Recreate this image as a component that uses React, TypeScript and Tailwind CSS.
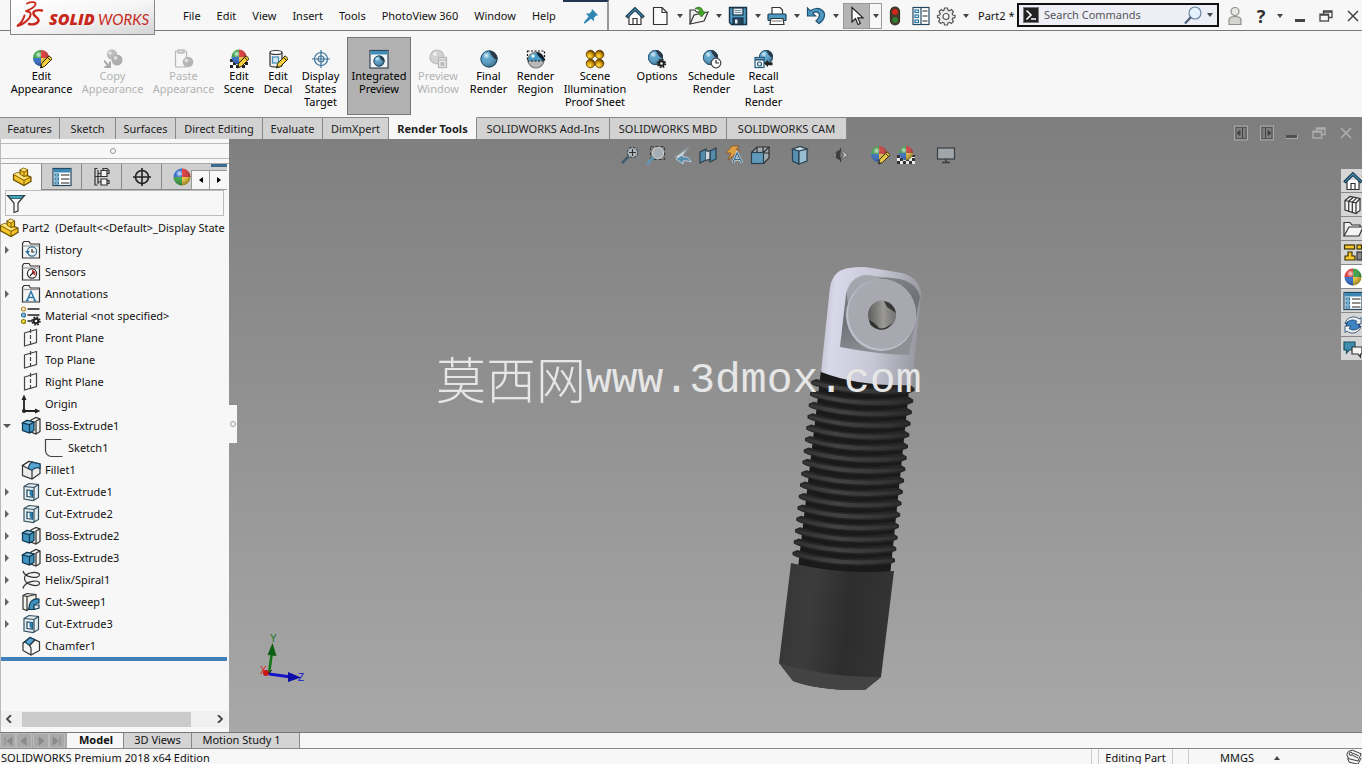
import React from "react";

type P = { className?: string };

const Svg = ({
  s = 20,
  className = "",
  children,
}: {
  s?: number;
  className?: string;
  children: React.ReactNode;
}) => (
  <svg
    width={s}
    height={s}
    viewBox="0 0 20 20"
    fill="none"
    stroke="#333"
    strokeWidth="1.2"
    className={"shrink-0 " + className}
    aria-hidden="true"
  >
    {children}
  </svg>
);

const Defs = () => (
  <svg width="0" height="0" className="absolute" aria-hidden="true">
    <defs>
      <radialGradient id="shine" cx="0.35" cy="0.3" r="0.75">
        <stop offset="0" stopColor="#fff" stopOpacity="0.85" />
        <stop offset="0.3" stopColor="#fff" stopOpacity="0.1" />
        <stop offset="1" stopColor="#000" stopOpacity="0.4" />
      </radialGradient>
      <radialGradient id="gold" cx="0.4" cy="0.7" r="0.7">
        <stop offset="0" stopColor="#ffe14a" />
        <stop offset="0.6" stopColor="#c88a00" />
        <stop offset="1" stopColor="#4a2c00" />
      </radialGradient>
    </defs>
  </svg>
);

const Caret = ({ className = "" }: P) => (
  <svg width="6" height="4" viewBox="0 0 6 4" className={"shrink-0 " + className} aria-hidden="true">
    <path d="M0 0h6L3 4z" fill="#444" />
  </svg>
);

const PieBall = ({
  cx = 10,
  cy = 9,
  r = 8,
  colors = ["#2563c9", "#d92b2b", "#f0c62e", "#2f9e3c"],
}: {
  cx?: number;
  cy?: number;
  r?: number;
  colors?: string[];
}) => (
  <g stroke="none">
    <path d={`M${cx} ${cy}V${cy - r}A${r} ${r} 0 0 0 ${cx - r} ${cy}z`} fill={colors[0]} />
    <path d={`M${cx} ${cy}V${cy - r}A${r} ${r} 0 0 1 ${cx + r} ${cy}z`} fill={colors[1]} />
    <path d={`M${cx} ${cy}V${cy + r}A${r} ${r} 0 0 0 ${cx + r} ${cy}z`} fill={colors[2]} />
    <path d={`M${cx} ${cy}V${cy + r}A${r} ${r} 0 0 1 ${cx - r} ${cy}z`} fill={colors[3]} />
    <circle cx={cx} cy={cy} r={r} fill="url(#shine)" />
  </g>
);

const BlueBall = ({ cx = 10, cy = 10, r = 8 }: { cx?: number; cy?: number; r?: number }) => (
  <g stroke="none">
    <circle cx={cx} cy={cy} r={r} fill="#4a9ac6" />
    <path
      d={`M${cx} ${cy - r}A${r} ${r} 0 0 1 ${cx + r} ${cy}Q${cx + r / 2} ${cy + r / 6} ${cx} ${cy - r}z`}
      fill="#0f1e2c"
    />
    <circle cx={cx} cy={cy} r={r} fill="url(#shine)" />
    <circle cx={cx} cy={cy} r={r - 0.4} fill="none" stroke="#21465e" strokeWidth="0.9" />
  </g>
);

const Pencil = () => (
  <g strokeWidth="1">
    <path d="M8.5 19l1.2-4.6 7.5-7.6 3 3-7.6 7.6z" fill="#f5cf3e" stroke="#2b2200" />
    <path d="M8.5 19l.6-2.4 1.8 1.8z" fill="#222" stroke="none" />
    <path d="M15.5 8.4l3 3" stroke="#2b2200" />
  </g>
);

const pencilBall = ["#2f9e3c", "#d92b2b", "#f0c62e", "#2563c9"];

const EditAppearanceIcon = () => (
  <Svg>
    <PieBall cx={9} colors={pencilBall} />
    <Pencil />
  </Svg>
);
const CopyAppearanceIcon = () => (
  <Svg>
    <g stroke="none" fill="#bdbdbd">
      <circle cx="9" cy="5.5" r="5.2" />
      <circle cx="14" cy="11" r="5.5" fill="#adadad" />
      <circle cx="7" cy="4" r="1.8" fill="#e2e2e2" />
      <circle cx="12.5" cy="9" r="2" fill="#dcdcdc" />
      <path d="M1 10.5l5 5V12.5h2v6.5H1.500v-2H4L1 13z" fill="#a8a8a8" />
    </g>
  </Svg>
);
const PasteAppearanceIcon = () => (
  <Svg>
    <rect x="1.5" y="2" width="11" height="16" rx="1" stroke="#b5b5b5" />
    <rect x="4" y="1" width="6" height="3" fill="#ddd" stroke="#b5b5b5" />
    <circle cx="14" cy="13" r="5.3" fill="#b5b5b5" stroke="none" />
    <circle cx="12.5" cy="11.5" r="2" fill="#ddd" stroke="none" />
  </Svg>
);
const Checker = () => (
  <g stroke="none">
    <rect x="1" y="10" width="18" height="9" fill="#fff" />
    <path
      d="M1 10h3v3H1zM4 13h3v3H4zM1 16h3v3H1zM7 16h3v3H7zM13 16h3v3h-3zM16 13h3v3h-3zM10 13h3v3h-3zM16 10h3v2h-3z"
      fill="#222"
    />
  </g>
);
const EditSceneIcon = () => (
  <Svg>
    <Checker />
    <PieBall cx={10} cy={8} r={7.5} colors={pencilBall} />
    <Pencil />
  </Svg>
);
const EditDecalIcon = () => (
  <Svg>
    <path d="M2 3.5v13c0 2 12 2 12 0v-13" fill="#eee" />
    <ellipse cx="8" cy="3.5" rx="6" ry="2" fill="#fff" />
    <rect x="4.5" y="8" width="6" height="6" fill="#cfe6f2" stroke="#3f8db8" />
    <Pencil />
  </Svg>
);
const TargetBlueIcon = () => (
  <Svg>
    <g stroke="#38719b">
      <circle cx="10" cy="10" r="6.5" />
      <circle cx="10" cy="10" r="3" />
      <path d="M10 1v18M1 10h18" />
    </g>
  </Svg>
);
const IntegratedIcon = () => (
  <Svg>
    <rect x="1" y="1.5" width="18" height="17.5" fill="#f4f4f4" stroke="#345" />
    <rect x="1.5" y="2" width="17" height="3.5" fill="#3f8db8" stroke="none" />
    <BlueBall cy={12} r={5.5} />
  </Svg>
);
const PreviewWindowIcon = () => (
  <Svg>
    <circle cx="9" cy="8" r="7" fill="#d2d2d2" stroke="#bbb" />
    <circle cx="7" cy="5" r="2" fill="#eee" stroke="none" />
    <rect x="10.5" y="8.5" width="8" height="10" fill="#e8e8e8" stroke="#b5b5b5" />
    <path d="M10.5 11h8" stroke="#b5b5b5" />
    <rect x="12.5" y="13" width="4" height="4" fill="#bbb" stroke="none" />
  </Svg>
);
const FinalRenderIcon = () => (
  <Svg>
    <BlueBall r={8.5} />
  </Svg>
);
const RenderRegionIcon = () => (
  <Svg>
    <circle cx="10" cy="11" r="8" fill="#b9b9b9" stroke="#777" />
    <path d="M2 12a8 8 0 0 1 16 0z" fill="#4a9ac6" stroke="none" />
    <path d="M10 3a8 8 0 0 1 8 9Q13 9 10 3z" fill="#0f1e2c" stroke="none" />
    <circle cx="7" cy="7" r="1.8" fill="#dff" stroke="none" />
    <rect x="1.5" y="2" width="17" height="10" stroke="#111" strokeDasharray="2 1.5" />
  </Svg>
);
const IlluminationIcon = () => (
  <Svg>
    {[5.5, 14.5].map((x) =>
      [5.5, 14.5].map((y) => (
        <circle key={`${x}-${y}`} cx={x} cy={y} r="4.3" fill="url(#gold)" stroke="#5a3b00" strokeWidth="0.8" />
      )),
    )}
  </Svg>
);
const Gear = ({ x = 14.5, y = 14.5 }: { x?: number; y?: number }) => (
  <g transform={`translate(${x} ${y})`}>
    <circle r="3.7" stroke="#222" strokeWidth="2" strokeDasharray="1.6 1.3" />
    <circle r="2.3" stroke="#222" strokeWidth="2" fill="#f6f6f6" />
  </g>
);
const OptionsIcon = () => (
  <Svg>
    <BlueBall cx={8.5} cy={8.5} r={7.5} />
    <Gear />
  </Svg>
);
const ScheduleIcon = () => (
  <Svg>
    <BlueBall cx={8.5} cy={8.5} r={7.5} />
    <circle cx="14" cy="14" r="4.8" fill="#fff" stroke="#444" />
    <path d="M14 11v3h3" stroke="#333" />
  </Svg>
);
const RecallIcon = () => (
  <Svg>
    <BlueBall cx={12} cy={8} r={7} />
    <rect x="1" y="8.5" width="9" height="10" fill="#f6f6f6" stroke="#245a7c" />
    <path d="M1 10.5h9" stroke="#245a7c" strokeWidth="2" />
    <circle cx="5.5" cy="15" r="2" stroke="#245a7c" />
    <path d="M10 14.5l4-3.5v2.200h4.500v3H14V18z" fill="#222" stroke="none" />
  </Svg>
);

const HomeIcon = () => (
  <Svg>
    <path d="M4 9v9.500h12V9" fill="#fff" />
    <path d="M8 18.5v-6h4v6" />
    <path d="M10 1.5L1 10.300l1.500 1.400L10 4.500l7.500 7.200 1.500-1.400z" fill="#4a9ec6" stroke="#1d3d52" />
  </Svg>
);
const NewIcon = () => (
  <Svg>
    <path d="M3.5 1.5h8.500l5 5v12H3.500z" fill="#fbfbfb" />
    <path d="M12 1.5v5h5" />
  </Svg>
);
const OpenIcon = () => (
  <Svg>
    <path d="M1 18V4h5l1.500 2H14v3" fill="#eee" />
    <path d="M1 18L5 9l14-3-4 9z" fill="#f4f4f2" />
    <path
      d="M6 2.500c5-3 8 0 8 3.500h2.500L12.500 11 8.500 6H11c0-2-2-3.500-5-3.500z"
      fill="#46a52b"
      stroke="#2a6e17"
      strokeWidth="0.8"
    />
  </Svg>
);
const SaveIcon = () => (
  <Svg>
    <path d="M1.500 1.500h17v17h-15l-2-2z" fill="#4d96bd" stroke="#173349" strokeWidth="1.4" />
    <rect x="5" y="2" width="10" height="7" fill="#e9eef2" stroke="#173349" />
    <path d="M6.500 4.500h7M6.500 6.500h7" stroke="#7c93a3" />
    <rect x="5" y="12" width="10" height="6.5" fill="#27435a" stroke="#173349" />
    <rect x="7" y="13.5" width="2.5" height="4" fill="#e9eef2" stroke="none" />
  </Svg>
);
const PrintIcon = () => (
  <Svg>
    <path d="M5 8V1.500h8l2.500 2.500v4" fill="#fff" />
    <rect x="1" y="8" width="18" height="6.5" rx="1" fill="#4d9ac3" stroke="#1d3d52" />
    <path d="M4 12.500h12l1 6H3z" fill="#fff" />
    <path d="M5 15h10" stroke="#888" />
  </Svg>
);
const UndoIcon = () => (
  <Svg>
    <path
      d="M1.500 2v8h8L6.800 7.300c4-3 8-.3 6 4-.8 1.700-1.600 2.700-2.800 3.700l3 2.500c6-4 7-10 3.500-13C13 1.500 8 2 4.300 4.800z"
      fill="#4d9ac3"
      stroke="#1d4f70"
    />
  </Svg>
);
const CursorIcon = () => (
  <Svg>
    <path d="M5 1.500v14.500l3.500-3.500 2.500 6 2.300-1-2.500-5.700H16z" fill="#fff" stroke="#222" />
  </Svg>
);
const LightIcon = () => (
  <Svg>
    <rect x="5.500" y="1" width="9" height="18" rx="4.500" fill="#4a3a2c" stroke="#332" />
    <circle cx="10" cy="5.800" r="2.900" fill="#d8251c" stroke="none" />
    <circle cx="10" cy="14" r="2.900" fill="#2d7d33" stroke="none" />
  </Svg>
);
const ListIcon = () => (
  <Svg>
    <rect x="2" y="1.500" width="16" height="17" fill="#fff" stroke="#24485f" />
    <path d="M10 1.500v17" stroke="#24485f" />
    <g stroke="#2878a5">
      <rect x="4" y="4" width="3.500" height="2.500" />
      <rect x="4" y="9" width="3.500" height="2.500" />
      <rect x="4" y="14" width="3.500" height="2.500" />
    </g>
    <path d="M11.500 5h5M11.500 10h5M11.500 15h5" stroke="#222" />
  </Svg>
);
const GearIcon = () => (
  <Svg>
    <path
      d="M8.500 2h3l.5 2.200 1.400.6 2-1.200 2 2-1.200 2 .6 1.400 2.200.5v2l-2.200.6-.6 1.400 1.200 2-2 2-2-1.200-1.400.6-.5 2.100h-3l-.5-2.100-1.400-.6-2 1.200-2-2 1.200-2-.6-1.400L1.500 11.500v-2L3.700 9l.6-1.400-1.200-2 2-2 2 1.200L8 4.200z"
      fill="#eee"
      stroke="#555"
    />
    <circle cx="10" cy="10.500" r="3" fill="#f7f7f7" stroke="#555" />
  </Svg>
);
const PinIcon = () => (
  <Svg s={16}>
    <path d="M11 1l8 8-2.500.5-3 3 .5 4.500-4-3.500L3 19l-2 .5.500-2L7 10.500 3.500 7 8 6.800l3-3z" fill="#2f86b5" stroke="none" />
  </Svg>
);
const UserIcon = () => (
  <Svg>
    <path d="M4 18.500V14c0-3 3-3.500 6-3.500s6 .5 6 3.500v4.500z" fill="#d4d4d0" stroke="#8f8f8a" />
    <circle cx="10" cy="5.500" r="4" fill="#e8e8e4" stroke="#8f8f8a" />
  </Svg>
);
const RestoreIcon = ({ color = "#444" }: { color?: string }) => (
  <svg width="14" height="12" viewBox="0 0 14 12" fill="none" stroke={color} strokeWidth="1.3" aria-hidden="true">
    <path d="M4.500 4V1h8.500v6.500H9.500" />
    <rect x="1" y="4.200" width="8.500" height="6.800" />
    <path d="M1 5h8.500M4.500 2H13" />
  </svg>
);
const CloseIcon = ({ color = "#444" }: { color?: string }) => (
  <svg width="12" height="12" viewBox="0 0 12 12" stroke={color} strokeWidth="1.5" aria-hidden="true">
    <path d="M1 1l10 10M11 1L1 11" />
  </svg>
);
const PaneArrow = ({ right = false }: { right?: boolean }) => (
  <svg width="14" height="16" viewBox="0 0 14 16" fill="none" stroke="#a8a8a8" aria-hidden="true">
    <rect x="0.5" y="1" width="13" height="14" />
    <rect x="2" y="2.500" width="10" height="11" stroke="#555" />
    {right ? (
      <path d="M5.500 3v10M8 5.500l3 2.500-3 2.500z" fill="#444" stroke="#444" />
    ) : (
      <path d="M8.500 3v10M6 5.500L3 8l3 2.500z" fill="#444" stroke="#444" />
    )}
  </svg>
);

/* Heads-up view toolbar */
const ZoomFit = () => (
  <Svg>
    <circle cx="12.500" cy="7.500" r="5.200" fill="#b9c4cb" stroke="#444" strokeDasharray="3 1" />
    <path d="M12.500 4v7M9 7.500h7" stroke="#222" />
    <path d="M8.500 11.500L2 18" stroke="#36566b" strokeWidth="2.600" />
  </Svg>
);
const ZoomArea = () => (
  <Svg>
    <rect x="4.500" y="1.500" width="14" height="13" strokeDasharray="3 2" />
    <circle cx="12" cy="8" r="5.500" fill="#aab6bc" stroke="#ddd" />
    <path d="M8 12l-7 7" stroke="#5b9dbf" strokeWidth="2.600" />
  </Svg>
);
const PrevView = () => (
  <Svg>
    <path d="M17 2L3 12l5 2.500z" fill="#e4eaed" stroke="#8a9499" />
    <path
      d="M4 14l7-4.500v2.500c4-.5 6.500 1 8 5-3-1-5-1.500-8-1V19z"
      fill="#4d8fb5"
      stroke="#e4edf2"
      strokeWidth="0.8"
    />
  </Svg>
);
const SectionView = () => (
  <Svg>
    <path d="M2 7l6-3v11l-6 3zM12 6l6-3v11l-6 3z" fill="#4c8db3" stroke="#1b3546" />
    <path d="M8 5c2 3 3 0 4 1v9c-1-2-2 1-4 0" fill="#dfe7eb" stroke="#1b3546" />
  </Svg>
);
const AnnotView = () => (
  <Svg>
    <path d="M8 1h7l-3 4h4L4 15l3-7H2z" fill="#f0a63a" stroke="#8c4b0c" strokeWidth="0.8" />
    <path d="M9 18l4-10 5 10M11 14.500h5.500" stroke="#dce9f0" strokeWidth="2.600" />
    <path d="M9 18l4-10 5 10M11 14.500h5.500" stroke="#2b6c94" />
  </Svg>
);
const ViewOrient = () => (
  <Svg>
    <path d="M1.500 7.500L7 2h12v11l-5.500 5.500" fill="#a9b2b7" stroke="#222" />
    <path d="M7 2v5M13.500 7.500L19 2M13 2v5M19 8h-5" stroke="#222" />
    <rect x="1.500" y="7.500" width="12" height="11" fill="#5a9fc6" stroke="#1b3546" />
  </Svg>
);
const DisplayStyle = () => (
  <Svg>
    <path d="M2.500 4L9 6v13l-6.500-3z" fill="#4f94bb" stroke="#1b3546" />
    <path d="M9 6l8-2v12l-8 3z" fill="#9cc9e2" stroke="#1b3546" />
    <path d="M2.500 4L10 1.500 17 4 9 6z" fill="#d8ebf5" stroke="#1b3546" />
  </Svg>
);
const HideShow = () => (
  <Svg>
    <path d="M3 10q7.500-8 15 0-7.500 8-15 0z" fill="#c4c4c4" stroke="#6f6f6f" />
    <path d="M10.500 5v10a5 5 0 0 1 0-10z" fill="#333" stroke="none" />
    <path d="M10.500 3v14" stroke="#333" />
    <path d="M10.500 7.500a2.500 2.500 0 0 1 0 5" fill="#8b8b8b" stroke="#555" />
  </Svg>
);
const ApplyScene = () => (
  <Svg>
    <Checker />
    <PieBall cx={10} cy={8} r={7} colors={pencilBall} />
  </Svg>
);
const MonitorIcon = () => (
  <Svg>
    <rect x="1.500" y="3" width="17" height="11" fill="#a7adb1" stroke="#2c3338" />
    <path d="M10 14v3.500M6 17.500h8" stroke="#2c3338" strokeWidth="1.500" />
  </Svg>
);

/* Feature tree icons */
const PartIcon = () => (
  <Svg>
    <path
      d="M1.500 7.500L5.500 5.500 8 6.800V3.200L11.500 1.200 15.500 3V8.500L19 10.200V14.300L12 18.500 1.500 12.800z"
      fill="#f5c52a"
      stroke="#6b5000"
    />
    <path d="M8 3.200L11.500 1.200 15.500 3 12 5zM1.500 7.500L5.500 5.500 15 10.500 12 13.300z" fill="#ffe27a" stroke="none" />
    <path
      d="M8 3.200L12 5.200 15.500 3M12 5.200V9.500L8 7M12 9.500l3.500-1M1.500 7.500L12 13.300v5.200M12 13.300l7-3.100"
      stroke="#6b5000"
      strokeWidth="0.9"
    />
  </Svg>
);
const FolderBase = () => <path d="M1.500 18V3.500l1.500-2h5l1.500 2.500h9V18z" fill="#f3f3f3" stroke="#333" />;
const HistoryIcon = () => (
  <Svg>
    <FolderBase />
    <path d="M1.500 6h17" stroke="#999" />
    <circle cx="11" cy="11.500" r="4.600" stroke="#2b6c94" />
    <path d="M11 9v3h2.500" stroke="#333" />
    <path d="M4 11l2.500 3 2.500-3z" fill="#2b6c94" stroke="none" />
  </Svg>
);
const SensorsIcon = () => (
  <Svg>
    <FolderBase />
    <path d="M1.500 6h17" stroke="#999" />
    <circle cx="11" cy="11.500" r="4.600" fill="#fff" stroke="#333" />
    <path d="M11 11.500V8a3.600 3.600 0 0 1 3 5.500z" fill="#d33" stroke="none" />
    <path d="M9 14l4-4.500" />
  </Svg>
);
const AnnotationsIcon = () => (
  <Svg>
    <FolderBase />
    <path d="M1.500 5.500h17" stroke="#999" />
    <path d="M6 16.500L10 7.500l4 9M7.500 13.500h5M4.800 16.500h2.700M12.500 16.500h2.800" stroke="#2b78a8" strokeWidth="1.500" />
  </Svg>
);
const MaterialIcon = () => (
  <Svg>
    <circle cx="2.500" cy="3" r="2" stroke="#b8860b" />
    <circle cx="2.500" cy="9" r="2" fill="#8fc3e0" stroke="#2b6c94" />
    <circle cx="2.500" cy="15.500" r="2" fill="#f3e14a" stroke="#8a7a00" />
    <path d="M6.500 3h12M6.500 9h12M6.500 15h5" stroke="#222" strokeWidth="1.600" />
    <Gear x={15} y={15} />
  </Svg>
);
const PlaneIcon = () => (
  <Svg>
    <path d="M3.500 5l12-3.500v13l-12 3.500z" stroke="#444" />
    <path d="M9.500 1v18" stroke="#444" strokeDasharray="4 2" />
  </Svg>
);
const OriginIcon = () => (
  <Svg>
    <path d="M3 5v12h12" stroke="#222" strokeWidth="1.800" />
    <path d="M.5 6L3 .5 5.500 6zM14 14.500l5.500 2.500-5.500 2.500z" fill="#222" stroke="none" />
    <circle cx="3" cy="17" r="2" fill="#222" stroke="none" />
  </Svg>
);
const BossIcon = () => (
  <Svg>
    <path d="M10 4l5-2.500 4 1.500v12.500l-4 2.500-5-2z" fill="#f3f3ee" stroke="#333" />
    <path d="M15 18V5l4-2" stroke="#333" />
    <path d="M1.500 7L6 4.500 13 6v8.500L8.500 17l-7-2.500z" fill="#3f93c0" stroke="#12384f" />
    <path d="M1.500 7L6 4.500 13 6 8.500 8.500z" fill="#7fc0e2" stroke="#12384f" />
    <path d="M8.500 8.500V17" stroke="#12384f" />
  </Svg>
);
const SketchIcon = () => (
  <Svg>
    <path d="M17.500 1.500H1.500v11c0 3 2.500 6 6 6h11" stroke="#444" />
  </Svg>
);
const FilletIcon = () => (
  <Svg>
    <path d="M1.500 5.500L8 1.500 19 4v9.500L11 19 1.500 15.500z" fill="#ececea" stroke="#333" />
    <path d="M1.500 5.500L8 1.500l4 1C9 4 8 6 8 9z" fill="#fafaf8" stroke="#333" />
    <path d="M11 2.200L19 4v4.500c-3-1.500-6-.5-8 2L7.500 8.500c0-3 1-5 3.500-6.300z" fill="#58a5d2" stroke="#17435e" />
    <path d="M11 10.500V19" stroke="#333" />
  </Svg>
);
const CutIcon = () => (
  <Svg>
    <path d="M3 4.500L8 1.500l9.500 1v13L12 18.500 3 17z" fill="#e4edf0" stroke="#34505f" />
    <path d="M3 4.500L13 5.500v13M13 5.500l4.500-3" stroke="#34505f" />
    <path d="M6 8l5.500.5v6.500L6 14.500z" fill="#fff" stroke="#17435e" />
    <path d="M8.500 8.300l3 .2v6.500L8.500 13z" fill="#2a7eab" stroke="none" />
  </Svg>
);
const HelixIcon = () => (
  <Svg>
    <path d="M2 1c2 7 16 8 16.500 4S4 1.500 3.500 8 18 18 18.500 13.500 4 10.500 2 18.500" stroke="#333" />
  </Svg>
);
const SweepIcon = () => (
  <Svg>
    <path d="M2 3.500l4-2 9 1V9L6 18.500l-4-1.500z" fill="#f3f3ee" stroke="#333" />
    <path d="M2 3.500l4 1V18M6 4.500l9-2" stroke="#333" />
    <path d="M8 17.500c0-8 3-11 10-10.500v4c-4 0-5 2-5 6.500z" fill="#3f93c0" stroke="#12384f" />
    <path d="M13 13h5v3l-5 1.500z" fill="#dfeaf0" stroke="#12384f" />
  </Svg>
);
const ChamferIcon = () => (
  <Svg>
    <path d="M2 7L9 1.500 18.500 6v8.500L10 19l-8-4.500z" fill="#f6f6f4" stroke="#333" />
    <path d="M9 1.500l5 2.300L8.500 9.500 4 6z" fill="#58a5d2" stroke="#17435e" />
    <path d="M14 3.800L8.500 9.500 10 12v7M2 7l2-1" stroke="#333" />
  </Svg>
);
const FilterIcon = () => (
  <Svg>
    <path d="M1.500 2.500h17L12 10v8l-4 1.500V10z" fill="#f8f8f8" stroke="#333" />
    <path d="M2.500 2.500h15L15 5.500H5z" fill="#4aa0b8" stroke="#1d4f60" strokeWidth="0.8" />
  </Svg>
);

/* Manager tab and task pane icons */
const PropIcon = () => (
  <Svg>
    <rect x="1" y="1.500" width="18" height="17" fill="#fff" stroke="#24485f" />
    <rect x="1.500" y="2" width="17" height="3.500" fill="#3b88b4" stroke="none" />
    <g stroke="#2878a5">
      <rect x="3" y="7" width="3.500" height="2" />
      <rect x="3" y="11" width="3.500" height="2" />
      <rect x="3" y="15" width="3.500" height="2" />
    </g>
    <path d="M9 8h8.500M9 12h8.500M9 16h8.500" stroke="#222" />
  </Svg>
);
const ConfigIcon = () => (
  <Svg>
    <path d="M5.500 1.500H3v16.500h2.500M3 9.500H9M6 6.500h3M6 15h3M6 3v14" stroke="#333" />
    <path d="M9 3.500h6v6H9zM9 12h6v6H9z" fill="#f2f2f2" stroke="#333" />
    <path d="M11 3.500v-2h4l2 2v3h-2M15 13.500h2v3h-2" stroke="#333" />
  </Svg>
);
const DimIcon = () => (
  <Svg>
    <circle cx="10" cy="10" r="6.500" stroke="#222" strokeWidth="1.600" />
    <path d="M10 1v18M1 10h18" stroke="#222" strokeWidth="1.600" />
  </Svg>
);
const BallIcon = () => (
  <Svg>
    <PieBall cy={10} r={8.500} />
  </Svg>
);
const PaneBallIcon = () => (
  <Svg>
    <PieBall cy={10} r={8.500} colors={["#d92b2b", "#2f9e3c", "#f0c62e", "#2563c9"]} />
  </Svg>
);
const LibraryIcon = () => (
  <Svg>
    <path d="M2 5.500L7 1.500l10 2v12L13 18.500 2 15z" fill="#f3f3f3" stroke="#333" />
    <path d="M2 5.500l11 2.500v10.500M13 8l4-4.500M5.700 6.300v9.800M9.300 7.200v10M5.700 6.300l4.600-4M9.300 7.200l4.400-4.400" stroke="#333" />
  </Svg>
);
const FolderIcon = () => (
  <Svg>
    <path d="M1 17V3.500h6L9 6h8v2" fill="#eee" stroke="#333" />
    <path d="M1 17L6 8h14l-4 9z" fill="#f5f5f5" stroke="#333" />
  </Svg>
);
const PaletteIcon = () => (
  <Svg>
    <g fill="#f7c92c" stroke="#3b2f00">
      <rect x="1.500" y="2" width="10" height="4" />
      <rect x="14" y="2" width="4.500" height="4" />
      <path d="M5 9h4v4h3v4H2v-4h3z" />
    </g>
    <rect x="14" y="9" width="5" height="8" fill="#888" stroke="#333" />
  </Svg>
);
const SyncIcon = () => (
  <Svg>
    <circle cx="10" cy="10" r="6.500" fill="#3c86c8" stroke="#1c3f78" />
    <path
      d="M2 9c1-7 10-9 14-5l2-1.500V9h-6l2-2.500C11 4 6 4.500 2 9zM18 11c-1 7-10 9-14 5l-2 1.500V11h6l-2 2.500c3 2.500 8 2 12-2.500z"
      fill="#f0f4f8"
      stroke="#1c3f60"
      strokeWidth="0.8"
    />
  </Svg>
);
const ForumIcon = () => (
  <Svg>
    <path d="M1 3h11v8H6l-2.500 3v-3H1z" fill="#3f8db0" stroke="#1d4f60" />
    <path d="M9 8h10v7h-1.500v3L15 15H9z" fill="#f4f4f4" stroke="#333" />
  </Svg>
);
const TagIcon = () => (
  <Svg s={16}>
    <path d="M3 3l5-1.500L19 6l-4 9L3 12 1 7z" fill="#f4f4f4" stroke="#333" />
    <circle cx="6" cy="6" r="2" />
    <path d="M2 11.500l2 5 11 2.500 4-8M8 8l7 3M9 5.500l7 3" />
  </Svg>
);

const Logo = () => (
  <svg width="137" height="30" viewBox="0 0 137 30" fill="none" aria-label="3DS SOLIDWORKS" role="img">
    <g stroke="#c8281c" strokeLinecap="round">
      <path d="M12 3.500C16 1.500 21.500 1.500 20.500 4.500 19.500 7.500 15 9.500 11 11" strokeWidth="1.800" />
      <path d="M12 11.500C17.500 11.500 16 17 12.500 20 9 23.500 5 25.500 2 26 6 23.500 8.500 19 9.500 15.500" strokeWidth="2" />
      <path d="M27 10.500C22 9.500 17.500 11 18.500 14 19.500 17 24.500 18 23.500 21 22.500 24 17.500 25 14 24" strokeWidth="2.400" />
    </g>
    <text
      x="34"
      y="25"
      fill="#c8281c"
      fontFamily="Open Sans, Noto Sans, sans-serif"
      fontSize="16"
      fontWeight="800"
      fontStyle="italic"
    >
      SOLID
    </text>
    <text x="83" y="25" fill="#c8281c" fontFamily="Lato, Noto Sans, sans-serif" fontSize="15" fontStyle="italic">
      WORKS
    </text>
  </svg>
);

const menus = ["File", "Edit", "View", "Insert", "Tools", "PhotoView 360", "Window", "Help"];

const quick = [
  { label: "New", icon: <NewIcon /> },
  { label: "Open", icon: <OpenIcon /> },
  { label: "Save", icon: <SaveIcon /> },
  { label: "Print", icon: <PrintIcon /> },
  { label: "Undo", icon: <UndoIcon /> },
];

const TitleBar = () => (
  <header className="flex h-[31px] shrink-0 items-center border-b border-[#777]">
    <div className="relative z-10 ml-2.5 flex h-[35px] w-[145px] shrink-0 self-start border border-t-0 border-[#888] bg-gradient-to-br from-white via-[#f6f6f6] to-[#d4d4d4] pl-1">
      <Logo />
    </div>
    <nav className="ml-5 flex w-[388px] shrink-0 items-center pt-0.5 text-[#111]">
      {menus.map((m) => (
        <button key={m} className="px-2 whitespace-nowrap">
          {m}
        </button>
      ))}
    </nav>
    <div className="flex h-full w-[46px] shrink-0 items-center justify-center border-t-2 border-r-2 border-t-[#1f3550] border-r-[#999] pl-3">
      <button aria-label="Pin menu">
        <PinIcon />
      </button>
    </div>
    <div className="ml-4 flex h-full shrink-0 items-center pt-0.5">
      <button aria-label="Home" className="mr-[5px]">
        <HomeIcon />
      </button>
      {quick.map((q) => (
        <div key={q.label} className="flex items-center">
          <button aria-label={q.label}>{q.icon}</button>
          <button aria-label={q.label + " options"} className="flex w-[19px] justify-center">
            <Caret />
          </button>
        </div>
      ))}
      <div className="-ml-0.5 flex h-[26px] w-[39px] items-stretch border border-[#999]">
        <button aria-label="Select" className="flex w-[25px] items-center justify-center bg-[#b4b4b4]">
          <CursorIcon />
        </button>
        <button aria-label="Select options" className="flex flex-1 items-center justify-center border-l border-[#999]">
          <Caret />
        </button>
      </div>
      <button aria-label="Rebuild" className="ml-[3px]">
        <LightIcon />
      </button>
      <button aria-label="File properties" className="ml-1.5">
        <ListIcon />
      </button>
      <button aria-label="Settings" className="ml-[5px]">
        <GearIcon />
      </button>
      <button aria-label="Settings options" className="flex w-[19px] justify-center">
        <Caret />
      </button>
    </div>
    <span className="ml-[3px] w-9 shrink-0 pt-0.5 whitespace-nowrap">Part2 *</span>
    <label className="ml-[3px] flex h-6 w-[202px] shrink-0 items-center border-2 border-[#111] bg-[#eeeef6] pl-1">
      <svg width="16" height="16" viewBox="0 0 16 16" className="shrink-0" aria-hidden="true">
        <rect x="0.500" y="0.500" width="15" height="15" fill="#222" stroke="#777" />
        <path d="M3.500 3.500L8 8l-4.500 4.500M8 12h5" fill="none" stroke="#fff" strokeWidth="1.600" />
      </svg>
      <input
        aria-label="Search Commands"
        placeholder="Search Commands"
        className="ml-[5px] w-0 min-w-0 flex-1 bg-transparent outline-none placeholder:text-[#555]"
      />
      <Svg>
        <circle cx="12" cy="8" r="6" fill="#e4f0fa" stroke="#6b87a5" />
        <path d="M7.800 12.200L2 18.500" stroke="#4a5f78" strokeWidth="2.200" />
      </Svg>
      <Caret className="mx-1" />
    </label>
    <div className="ml-auto flex shrink-0 items-center pt-0.5 pr-[3px]">
      <button aria-label="Login">
        <UserIcon />
      </button>
      <button aria-label="Help" className="ml-2.5 w-3 text-center text-lg leading-5 font-bold text-[#333]">
        ?
      </button>
      <button aria-label="Help options" className="ml-[7px] flex w-3 justify-center">
        <Caret />
      </button>
      <button aria-label="Minimize" className="mt-2 ml-[9px] h-[3px] w-2.5 bg-[#444]" />
      <button aria-label="Restore" className="ml-3.5">
        <RestoreIcon />
      </button>
      <button aria-label="Close" className="ml-3.5">
        <CloseIcon />
      </button>
    </div>
  </header>
);

type Tool = { label: string; w: string; icon: React.ReactNode; off?: boolean; on?: boolean };
const tools: Tool[] = [
  { label: "Edit\nAppearance", w: "w-[71px]", icon: <EditAppearanceIcon /> },
  { label: "Copy\nAppearance", w: "w-[71px]", icon: <CopyAppearanceIcon />, off: true },
  { label: "Paste\nAppearance", w: "w-[71px]", icon: <PasteAppearanceIcon />, off: true },
  { label: "Edit\nScene", w: "w-[40px]", icon: <EditSceneIcon /> },
  { label: "Edit\nDecal", w: "w-[38px]", icon: <EditDecalIcon /> },
  { label: "Display\nStates\nTarget", w: "w-[47px] mr-[3px]", icon: <TargetBlueIcon /> },
  { label: "Integrated\nPreview", w: "w-[64px]", icon: <IntegratedIcon />, on: true },
  { label: "Preview\nWindow", w: "w-[54px]", icon: <PreviewWindowIcon />, off: true },
  { label: "Final\nRender", w: "w-[47px]", icon: <FinalRenderIcon /> },
  { label: "Render\nRegion", w: "w-[47px]", icon: <RenderRegionIcon /> },
  { label: "Scene\nIllumination\nProof Sheet", w: "w-[72px]", icon: <IlluminationIcon /> },
  { label: "Options", w: "w-[52px]", icon: <OptionsIcon /> },
  { label: "Schedule\nRender", w: "w-[57px]", icon: <ScheduleIcon /> },
  { label: "Recall\nLast\nRender", w: "w-[47px]", icon: <RecallIcon /> },
];

const Ribbon = () => (
  <div className="flex h-[86px] shrink-0 items-start pt-1.5 pl-1.5">
    {tools.map((t) => (
      <button
        key={t.label}
        disabled={t.off}
        className={
          "flex h-[78px] shrink-0 flex-col items-center border pt-[11px] leading-[13px] whitespace-pre " +
          t.w +
          (t.on ? " border-[#777] bg-[#b1b1b1]" : " border-transparent") +
          (t.off ? " text-[#b3b3b3]" : " text-black")
        }
      >
        {t.icon}
        <span className="flex justify-center text-center">{t.label}</span>
      </button>
    ))}
  </div>
);

const tabs = [
  { label: "Features", w: "w-[60px]" },
  { label: "Sketch", w: "w-[56px]" },
  { label: "Surfaces", w: "w-[60px]" },
  { label: "Direct Editing", w: "w-[87px]" },
  { label: "Evaluate", w: "w-[60px]" },
  { label: "DimXpert", w: "w-[66px]" },
  { label: "Render Tools", w: "w-[88px]", on: true },
  { label: "SOLIDWORKS Add-Ins", w: "w-[133px]" },
  { label: "SOLIDWORKS MBD", w: "w-[117px]" },
  { label: "SOLIDWORKS CAM", w: "w-[120px]" },
];

const CommandTabs = () => (
  <div className="flex h-[22px] shrink-0" role="tablist">
    {tabs.map((t) => (
      <button
        key={t.label}
        role="tab"
        aria-selected={!!t.on}
        className={
          "flex shrink-0 items-center justify-center border-t border-r whitespace-nowrap text-[#222] " +
          t.w +
          (t.on
            ? " border-t-[#f7f7f7] border-r-[#888] bg-[#f7f7f7] font-bold"
            : " border-[#888] bg-[#d2d2d2]")
        }
      >
        {t.label}
      </button>
    ))}
    <div className="mt-2 mr-2.5 ml-auto flex h-4 items-center gap-3">
      <button aria-label="Collapse left pane">
        <PaneArrow />
      </button>
      <button aria-label="Collapse right pane">
        <PaneArrow right />
      </button>
      <button aria-label="Minimize document" className="mt-2 h-1 w-3 border-r border-b border-[#aaa] bg-[#505050]" />
      <button aria-label="Restore document" className="ml-0.5">
        <RestoreIcon color="#b0b0b0" />
      </button>
      <button aria-label="Close document" className="ml-0.5">
        <CloseIcon color="#b0b0b0" />
      </button>
    </div>
  </div>
);

type Row = { label: string; icon: React.ReactNode; arrow?: "closed" | "open"; child?: boolean };
const rows: Row[] = [
  { label: "History", icon: <HistoryIcon />, arrow: "closed" },
  { label: "Sensors", icon: <SensorsIcon /> },
  { label: "Annotations", icon: <AnnotationsIcon />, arrow: "closed" },
  { label: "Material <not specified>", icon: <MaterialIcon /> },
  { label: "Front Plane", icon: <PlaneIcon /> },
  { label: "Top Plane", icon: <PlaneIcon /> },
  { label: "Right Plane", icon: <PlaneIcon /> },
  { label: "Origin", icon: <OriginIcon /> },
  { label: "Boss-Extrude1", icon: <BossIcon />, arrow: "open" },
  { label: "Sketch1", icon: <SketchIcon />, child: true },
  { label: "Fillet1", icon: <FilletIcon /> },
  { label: "Cut-Extrude1", icon: <CutIcon />, arrow: "closed" },
  { label: "Cut-Extrude2", icon: <CutIcon />, arrow: "closed" },
  { label: "Boss-Extrude2", icon: <BossIcon />, arrow: "closed" },
  { label: "Boss-Extrude3", icon: <BossIcon />, arrow: "closed" },
  { label: "Helix/Spiral1", icon: <HelixIcon />, arrow: "closed" },
  { label: "Cut-Sweep1", icon: <SweepIcon />, arrow: "closed" },
  { label: "Cut-Extrude3", icon: <CutIcon />, arrow: "closed" },
  { label: "Chamfer1", icon: <ChamferIcon /> },
];

const Arrow = ({ kind }: { kind?: "closed" | "open" }) => (
  <svg width="8" height="8" viewBox="0 0 8 8" className="shrink-0" aria-hidden="true">
    {kind === "closed" && <path d="M2 0l4 4-4 4z" fill="#666" />}
    {kind === "open" && <path d="M0 2h8L4 6z" fill="#555" />}
  </svg>
);

const managerTabs = [
  { label: "Feature tree", icon: <PartIcon />, on: true },
  { label: "Properties", icon: <PropIcon /> },
  { label: "Configurations", icon: <ConfigIcon /> },
  { label: "Dimensions", icon: <DimIcon /> },
  { label: "Display", icon: <BallIcon /> },
];

const FeaturePanel = () => (
  <aside className="relative flex w-[229px] shrink-0 flex-col border-l border-[#bbb] bg-[#f7f7f7]">
    <div className="mt-1 flex h-4 shrink-0 items-center justify-center border-y border-[#bbb]">
      <span className="mr-1 h-1.5 w-1.5 rounded-full border border-[#999]" />
    </div>
    <div className="mt-1 flex h-[27px] shrink-0 overflow-hidden border-t border-[#aaa]" role="tablist">
      {managerTabs.map((t) => (
        <button
          key={t.label}
          role="tab"
          aria-label={t.label}
          aria-selected={!!t.on}
          className={
            "flex shrink-0 items-center justify-center border-r border-[#888] " +
            (t.on ? "w-[41px] bg-[#f7f7f7] pl-0.5" : "w-10 border-b bg-[#cfcfcf]")
          }
        >
          {t.icon}
        </button>
      ))}
      <div className="-ml-[11px] flex flex-1 flex-col justify-between pr-0.5">
        <div className="ml-2.5 flex h-[6px] justify-end bg-[#cfcfcf]">
          <span className="h-[3px] w-4 bg-[#3b6c8e]" />
        </div>
        <div className="flex">
          <button
            aria-label="Scroll tabs left"
            className="flex h-5 w-[19px] items-center justify-center border border-[#999] bg-[#f7f7f7]"
          >
            <svg width="4" height="6" viewBox="0 0 4 6" aria-hidden="true">
              <path d="M4 0v6L0 3z" fill="#000" />
            </svg>
          </button>
          <button
            aria-label="Scroll tabs right"
            className="flex h-5 flex-1 items-center justify-center border-y border-[#999] bg-[#f7f7f7]"
          >
            <svg width="4" height="6" viewBox="0 0 4 6" aria-hidden="true">
              <path d="M0 0v6l4-3z" fill="#000" />
            </svg>
          </button>
        </div>
      </div>
    </div>
    <label className="mr-[5px] ml-1 flex h-[26px] shrink-0 items-center border border-[#bbb]">
      <FilterIcon />
      <input aria-label="Filter tree" className="w-0 min-w-0 flex-1 bg-transparent outline-none" />
    </label>
    <div className="mt-px mr-0.5 flex h-[22px] shrink-0 items-center whitespace-pre">
      <span className="-ml-0.5">
        <PartIcon />
      </span>
      <span className="ml-[3px]">{"Part2  (Default<<Default>_Display State"}</span>
    </div>
    <ul className="mr-0.5 border-b-4 border-[#3f80b8]" role="tree">
      {rows.map((r) => (
        <li
          key={r.label}
          role="treeitem"
          aria-selected={false}
          className={"flex h-[22px] items-center whitespace-nowrap " + (r.child ? "pl-[25px]" : "pl-0.5")}
        >
          <Arrow kind={r.arrow} />
          <span className="mr-1 ml-2.5">{r.icon}</span>
          {r.label}
        </li>
      ))}
    </ul>
    <div className="mt-auto mr-px mb-[5px] flex h-4 shrink-0 items-center justify-between bg-[#f0f0f0] px-[5px]">
      <svg width="6" height="8" viewBox="0 0 6 8" fill="none" stroke="#444" strokeWidth="1.8" aria-hidden="true">
        <path d="M5 0L1 4l4 4" />
      </svg>
      <div className="mr-auto ml-2.5 h-[15px] w-[169px] bg-[#cbcbcb]" />
      <svg width="6" height="8" viewBox="0 0 6 8" fill="none" stroke="#444" strokeWidth="1.8" aria-hidden="true">
        <path d="M1 0l4 4-4 4" />
      </svg>
    </div>
    <div className="absolute top-[266px] -right-2 flex h-[38px] w-2 items-center justify-center bg-[#f7f7f7]">
      <span className="h-1.5 w-1.5 rounded-full border border-[#999]" />
    </div>
  </aside>
);

const threads = Array.from({ length: 16 }, (_, i) => {
  const lx = 32.5 + 1.25 * i;
  const ly = 304 - 11.4 * i;
  const rx = 135 + 1.3 * i;
  const ry = 310 - 11.4 * i;
  return { lx, ly, rx, ry, mx: (lx + rx) / 2 - 6, my: ry + 6 };
});

const Model = () => (
  <svg width="200" height="450" viewBox="0 0 200 450" role="img" aria-label="Threaded part">
    <defs>
      <linearGradient id="body" x1="0" y1="0" x2="1" y2="0.13">
        <stop offset="0" stopColor="#353535" />
        <stop offset="0.3" stopColor="#3c3c3c" />
        <stop offset="0.65" stopColor="#2d2d2d" />
        <stop offset="1" stopColor="#343434" />
      </linearGradient>
      <linearGradient id="ring" gradientUnits="userSpaceOnUse" x1="35" y1="0" x2="155" y2="0">
        <stop offset="0" stopColor="#303030" />
        <stop offset="0.35" stopColor="#424242" />
        <stop offset="0.75" stopColor="#353535" />
        <stop offset="1" stopColor="#282828" />
      </linearGradient>
      <linearGradient id="head" x1="0" y1="0" x2="1" y2="0.1">
        <stop offset="0" stopColor="#b4b4c2" />
        <stop offset="0.16" stopColor="#d8d8ea" />
        <stop offset="0.6" stopColor="#c6c6d4" />
        <stop offset="1" stopColor="#9a9aa4" />
      </linearGradient>
      <linearGradient id="flat" x1="0" y1="0" x2="0.3" y2="1">
        <stop offset="0" stopColor="#8b8b92" />
        <stop offset="0.55" stopColor="#707177" />
        <stop offset="1" stopColor="#8f9096" />
      </linearGradient>
      <linearGradient id="hole" x1="0" y1="0" x2="1" y2="0">
        <stop offset="0" stopColor="#5d5d5c" />
        <stop offset="0.55" stopColor="#9a9995" />
        <stop offset="1" stopColor="#707070" />
      </linearGradient>
    </defs>
    <path d="M61 120L38 318l92 8L150 130z" fill="#1a1a1a" />
    {threads.map((t, i) => (
      <g key={i}>
        <path
          d={`M${t.lx + 5} ${t.ly - 4}Q${t.mx} ${t.my - 3} ${t.rx - 5} ${t.ry - 4}L${t.rx} ${t.ry - 1}V${t.ry + 2}L${t.rx - 5} ${t.ry + 4}Q${t.mx} ${t.my + 4} ${t.lx + 4} ${t.ly + 3}L${t.lx} ${t.ly + 1}V${t.ly - 2}z`}
          fill="#262626"
        />
        <path
          d={`M${t.lx + 2} ${t.ly - 2}Q${t.mx} ${t.my - 2} ${t.rx - 2} ${t.ry - 1}L${t.rx - 2} ${t.ry + 2}Q${t.mx} ${t.my + 3} ${t.lx + 1} ${t.ly + 1}z`}
          fill="url(#ring)"
        />
      </g>
    ))}
    <path d="M31 313Q80 325 134 321L121 427 105 440Q60 441 33 431L19 413z" fill="url(#body)" />
    <path d="M19 413Q70 428 121 427L105 440Q60 441 33 431z" fill="#434343" />
    <path d="M61 122L70 37Q73 20 89 18Q102 16 112 18L142 23Q158 27 161 42L152 135Q100 137 61 122z" fill="url(#head)" />
    <path d="M80 97L86 44Q90 27 106 25L140 29Q157 33 160 47L149 105Q115 104 80 97z" fill="url(#flat)" />
    <path d="M86 40Q90 28 106 25l20 2Q98 33 88 52z" fill="#c6c6d0" opacity="0.5" />
    <ellipse cx="121" cy="65" rx="35" ry="36" fill="#bfc0ca" />
    <ellipse cx="122" cy="64" rx="34" ry="35" fill="#a7a8b0" />
    <ellipse cx="122" cy="65" rx="14" ry="14.5" fill="url(#hole)" />
    <path d="M124 51q10 2 12 12l-9-6z" fill="#383838" />
    <path d="M109 70q5 2 10 8 6 2 13-5-4 8-13 6.500T109 70z" fill="#303030" />
  </svg>
);

const Triad = () => (
  <svg width="50" height="54" viewBox="0 0 50 54" fill="none" role="img" aria-label="Axis triad">
    <path d="M12 41L15 20" stroke="#16761a" strokeWidth="2.6" />
    <path d="M10.500 23l5-12L19.500 24z" fill="#0d5f14" />
    <path d="M12 42l22 3" stroke="#1414c8" strokeWidth="3" />
    <path d="M31 40l13 5.500-13 4.500z" fill="#0d0da8" />
    <circle cx="9" cy="41" r="3" fill="#c31515" />
    <path d="M11 42l4-4" stroke="#222" />
    <text x="13" y="10" fontSize="10" fill="#16761a" fontFamily="Liberation Sans, sans-serif">
      Y
    </text>
    <text x="3" y="42" fontSize="10" fill="#e01414" fontFamily="Liberation Sans, sans-serif">
      X
    </text>
    <text x="41" y="49" fontSize="10" fill="#1414c8" fontFamily="Liberation Sans, sans-serif">
      Z
    </text>
  </svg>
);

const views = [
  { label: "Zoom to fit", icon: <ZoomFit />, gap: "" },
  { label: "Zoom to area", icon: <ZoomArea />, gap: "ml-1.5" },
  { label: "Previous view", icon: <PrevView />, gap: "ml-1.5" },
  { label: "Section view", icon: <SectionView />, gap: "ml-1.5" },
  { label: "Annotation views", icon: <AnnotView />, gap: "ml-1.5" },
  { label: "View orientation", icon: <ViewOrient />, gap: "ml-1.5" },
  { label: "Display style", icon: <DisplayStyle />, gap: "ml-5" },
  { label: "Hide or show items", icon: <HideShow />, gap: "ml-5" },
  { label: "Edit appearance", icon: <EditAppearanceIcon />, gap: "ml-5" },
  { label: "Apply scene", icon: <ApplyScene />, gap: "ml-1.5" },
  { label: "View settings", icon: <MonitorIcon />, gap: "ml-5" },
];

const panes = [
  { label: "Resources", icon: <HomeIcon /> },
  { label: "Design library", icon: <LibraryIcon /> },
  { label: "File explorer", icon: <FolderIcon /> },
  { label: "View palette", icon: <PaletteIcon /> },
  { label: "Appearances", icon: <PaneBallIcon />, on: true },
  { label: "Custom properties", icon: <PropIcon /> },
  { label: "Updates", icon: <SyncIcon /> },
  { label: "Forum", icon: <ForumIcon /> },
];

const Viewport = () => (
  <main className="relative flex flex-1 items-start justify-end">
    <div className="absolute top-1.5 left-[391px] flex items-center opacity-85">
      {views.map((v) => (
        <button key={v.label} aria-label={v.label} className={v.gap}>
          {v.icon}
        </button>
      ))}
    </div>
    <div className="absolute top-[111px] left-[531px]">
      <Model />
    </div>
    <div className="absolute top-[493px] left-[28px]">
      <Triad />
    </div>
    <p className="absolute top-[212px] left-[207px] flex items-start whitespace-nowrap text-[#e6e6e6]">
      <span className="font-['Noto_Sans_CJK_SC',sans-serif] text-[50px] leading-[52px] font-light">莫西网</span>
      <span className="font-['Liberation_Mono',monospace] text-[43px] leading-[60px]">www.3dmox.com</span>
    </p>
    <div className="mt-[30px] flex flex-col gap-px overflow-hidden bg-[#888]">
      {panes.map((p) => (
        <button
          key={p.label}
          aria-label={p.label}
          className={"flex h-[23px] w-[21px] items-center pl-0.5 " + (p.on ? "bg-white" : "bg-[#d6d6d6]")}
        >
          {p.icon}
        </button>
      ))}
    </div>
  </main>
);

const BottomTabs = () => (
  <div className="flex h-4 shrink-0 border-t border-[#777] leading-[13px]">
    <div className="flex w-[67px] shrink-0 items-center justify-around bg-[#a9a9a9] pr-0.5">
      {["M2 1v8M9 1v8L4 5z", "M7 1v8L2 5z", "M3 1v8l5-4z", "M1 1v8l5-4zM8 1v8"].map((d, i) => (
        <button
          key={d}
          aria-label={["First tab", "Previous tab", "Next tab", "Last tab"][i]}
          className="flex h-full w-4 items-center justify-center border border-[#bbb]"
        >
          <svg width="10" height="10" viewBox="0 0 10 10" aria-hidden="true">
            <path d={d} fill="#8a8a8a" stroke="#8a8a8a" />
          </svg>
        </button>
      ))}
    </div>
    <button className="w-[57px] border-r border-[#888] bg-[#f7f7f7] pb-0.5 pl-0.5 font-bold">Model</button>
    <button className="w-[68px] border-r border-[#888] bg-[#d4d4d4] pb-0.5">3D Views</button>
    <button className="w-[108px] border-r border-[#888] bg-[#d4d4d4] pr-2 pb-0.5">Motion Study 1</button>
  </div>
);

const StatusBar = () => (
  <footer className="flex h-4 shrink-0 items-center justify-between border-t border-[#888] pl-px leading-4">
    <span className="pt-0.5 whitespace-nowrap">SOLIDWORKS Premium 2018 x64 Edition</span>
    <div className="flex h-full items-center">
      <span className="h-full w-2 border-x border-[#ccc]" />
      <span className="flex h-full w-[74px] items-center justify-center border-r border-[#ccc] pt-0.5 whitespace-nowrap">
        Editing Part
      </span>
      <span className="h-full w-4 border-r border-[#ccc]" />
      <button className="ml-[31px] flex w-[60px] items-center justify-between pt-0.5">
        MMGS
        <Caret className="rotate-180" />
      </button>
      <button aria-label="Tags" className="ml-[66px]">
        <TagIcon />
      </button>
    </div>
  </footer>
);

export default function App() {
  return (
    <div className="flex h-screen flex-col overflow-hidden bg-[#f7f7f7] font-['Noto_Sans','Noto_Sans_CJK_SC',sans-serif] text-[11px] leading-4 text-[#111]">
      <Defs />
      <TitleBar />
      <Ribbon />
      <div className="flex min-h-0 flex-1 flex-col bg-gradient-to-b from-[#7e7e7e] to-[#a8a8a8]">
        <CommandTabs />
        <div className="flex min-h-0 flex-1">
          <FeaturePanel />
          <Viewport />
        </div>
      </div>
      <BottomTabs />
      <StatusBar />
    </div>
  );
}
